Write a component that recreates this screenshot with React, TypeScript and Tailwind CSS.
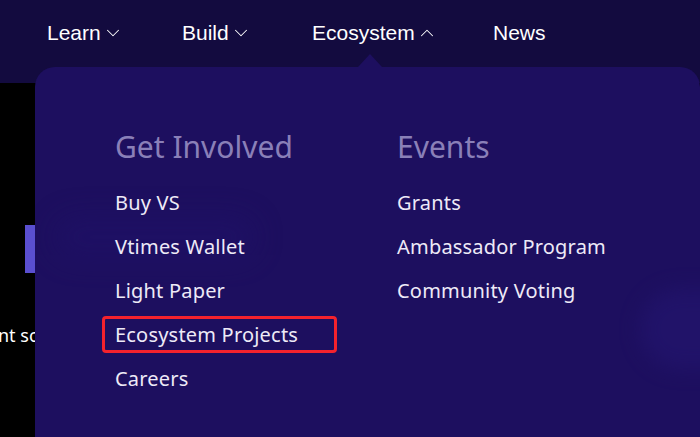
import { ChevronDown, ChevronUp } from "lucide-react";

const getInvolved = ["Buy VS", "Vtimes Wallet", "Light Paper", "Ecosystem Projects", "Careers"];
const events = ["Grants", "Ambassador Program", "Community Voting"];

function NavItem({ label, open, hasMenu }: { label: string; open?: boolean; hasMenu?: boolean }) {
  return (
    <div className="flex items-center text-[21px] leading-none text-white">
      <span>{label}</span>
      {hasMenu &&
        (open ? (
          <ChevronUp className="ml-[1px] mt-[1px] h-[22px] w-[22px]" strokeWidth={1.1} />
        ) : (
          <ChevronDown className="ml-[1px] mt-[1px] h-[22px] w-[22px]" strokeWidth={1.1} />
        ))}
    </div>
  );
}

function MenuColumn({ title, items, highlight }: { title: string; items: string[]; highlight?: string }) {
  return (
    <div className="flex flex-col">
      <h3 className="mb-[19px] text-[30px] leading-[36px] text-[#8a80b8]">{title}</h3>
      <ul className="flex flex-col">
        {items.map((item) => (
          <li key={item} className="h-[44px]">
            <span
              className={
                item === highlight
                  ? "-ml-[13px] inline-flex h-[37px] w-[235px] items-center rounded-[4px] border-[3px] border-[#f5222d] px-[10px] text-[20px] tracking-[0.2px] text-[#eeeaf7]"
                  : "inline-flex h-[37px] items-center text-[20px] tracking-[0.2px] text-[#eeeaf7]"
              }
            >
              {item}
            </span>
          </li>
        ))}
      </ul>
    </div>
  );
}

export default function App() {
  return (
    <div
      className="relative h-[437px] w-[700px] overflow-hidden bg-black"
      style={{ fontFamily: "'Noto Sans', 'Open Sans', sans-serif" }}
    >
      <header
        className="flex h-[83px] items-start bg-[#130b3f] pt-[21px]"
        style={{ fontFamily: "'Liberation Sans', Arial, sans-serif" }}
      >
        <nav className="flex items-center pl-[47px]">
          <div className="w-[135px]">
            <NavItem label="Learn" hasMenu />
          </div>
          <div className="w-[130px]">
            <NavItem label="Build" hasMenu />
          </div>
          <div className="w-[181px]">
            <NavItem label="Ecosystem" hasMenu open />
          </div>
          <NavItem label="News" />
        </nav>
      </header>

      <section className="relative pl-[25px] pt-[142px]">
        <div className="h-[48px] w-[10px] bg-[#5a4fd0]" />
        <p
          className="-ml-[27px] mt-[49px] whitespace-nowrap text-[18px] text-white"
          style={{ fontFamily: "'Noto Sans', sans-serif" }}
        >
          nt sc
        </p>
      </section>

      {/* dropdown */}
      <div className="absolute left-[35px] top-[67px] h-[400px] w-[665px] overflow-hidden rounded-[20px] bg-[#1d0f5f]">
        <div className="pointer-events-none absolute right-[-70px] top-[222px] h-[80px] w-[130px] rounded-full bg-[#22146c] opacity-80 blur-[10px]" />
        <div className="pointer-events-none absolute left-[20px] top-[150px] h-[40px] w-[200px] rounded-full bg-[#20126a] opacity-50 blur-[14px]" />
        <div className="relative flex pl-[80px] pt-[62px]">
          <div className="w-[282px]">
            <MenuColumn title="Get Involved" items={getInvolved} highlight="Ecosystem Projects" />
          </div>
          <MenuColumn title="Events" items={events} />
        </div>
      </div>
      <div className="absolute left-[358px] top-[54px] h-0 w-0 border-x-[12px] border-b-[13px] border-x-transparent border-b-[#1d0f5f]" />
    </div>
  );
}
